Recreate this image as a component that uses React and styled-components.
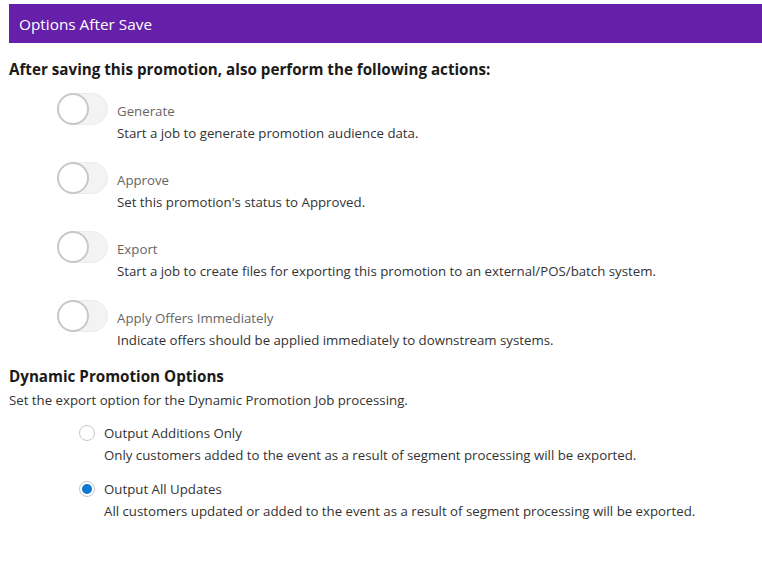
import React from "react";
import styled, { createGlobalStyle } from "styled-components";

const Global = createGlobalStyle`
  html, body { margin: 0; padding: 0; background: #fff; }
  body { font-family: "Open Sans", "Noto Sans", sans-serif; color: #222; }
`;

const Page = styled.div`
  padding: 4px 0 0 9px;
`;

const Header = styled.div`
  background: #651fa8;
  color: #fff;
  height: 39px;
  display: flex;
  align-items: center;
  padding-left: 10px;
  font-size: 15.35px;
`;

const SectionTitle = styled.h2`
  margin: ${(p) => p.$mt || 0}px 0 0;
  font-size: 15.2px;
  font-weight: 700;
  color: #1a1a1a;
  line-height: 20px;
`;

const ToggleList = styled.div`
  display: flex;
  flex-direction: column;
  gap: 17px;
  margin: 14px 0 0 48px;
`;

const ToggleRow = styled.div`
  display: flex;
  gap: 9px;
`;

const Track = styled.div`
  width: 51px;
  height: 32px;
  border-radius: 16px;
  background: #f3f3f3;
  border: 1px solid #ececec;
  box-sizing: border-box;
  position: relative;
  flex: none;
`;

const Knob = styled.div`
  position: absolute;
  left: -1px;
  top: -1px;
  width: 32px;
  height: 32px;
  border-radius: 50%;
  background: #fff;
  border: 2px solid #c8c8c8;
  box-sizing: border-box;
`;

const TextCol = styled.div`
  display: flex;
  flex-direction: column;
  padding-top: 8px;
`;

const ToggleLabel = styled.div`
  font-size: 13.25px;
  color: #666;
  line-height: 20px;
`;

const Desc = styled.div`
  font-size: 13.25px;
  color: #333;
  line-height: ${(p) => p.$lh || 24}px;
`;

const Intro = styled.div`
  font-size: 13.25px;
  color: #333;
  line-height: 20px;
  margin-top: 4px;
`;

const RadioList = styled.div`
  display: flex;
  flex-direction: column;
  gap: 12px;
  margin: 12px 0 0 70px;
`;

const RadioRow = styled.div`
  display: grid;
  grid-template-columns: 16px 1fr;
  column-gap: 9px;
  align-items: center;
`;

const RadioCircle = styled.div`
  width: 16px;
  height: 16px;
  border-radius: 50%;
  box-sizing: border-box;
  border: 1px solid #c6c6c6;
  background: #fff;
  display: flex;
  align-items: center;
  justify-content: center;
  &::after {
    content: "";
    width: 10px;
    height: 10px;
    border-radius: 50%;
    background: ${(p) => (p.$checked ? "#0a78d4" : "transparent")};
  }
`;

const RadioLabel = styled.div`
  font-size: 13.25px;
  color: #333;
  line-height: 22px;
`;

const toggles = [
  ["Generate", "Start a job to generate promotion audience data."],
  ["Approve", "Set this promotion's status to Approved."],
  ["Export", "Start a job to create files for exporting this promotion to an external/POS/batch system."],
  ["Apply Offers Immediately", "Indicate offers should be applied immediately to downstream systems."],
];

const radios = [
  ["Output Additions Only", "Only customers added to the event as a result of segment processing will be exported.", false],
  ["Output All Updates", "All customers updated or added to the event as a result of segment processing will be exported.", true],
];

export default function App() {
  return (
    <>
      <Global />
      <Page>
        <Header>Options After Save</Header>
        <SectionTitle $mt={16}>After saving this promotion, also perform the following actions:</SectionTitle>
        <ToggleList>
          {toggles.map(([l, d]) => (
            <ToggleRow key={l}>
              <Track>
                <Knob />
              </Track>
              <TextCol>
                <ToggleLabel>{l}</ToggleLabel>
                <Desc>{d}</Desc>
              </TextCol>
            </ToggleRow>
          ))}
        </ToggleList>
        <SectionTitle $mt={14}>Dynamic Promotion Options</SectionTitle>
        <Intro>Set the export option for the Dynamic Promotion Job processing.</Intro>
        <RadioList>
          {radios.map(([l, d, c]) => (
            <RadioRow key={l}>
              <RadioCircle $checked={c} />
              <RadioLabel>{l}</RadioLabel>
              <span />
              <Desc $lh={22}>{d}</Desc>
            </RadioRow>
          ))}
        </RadioList>
      </Page>
    </>
  );
}
